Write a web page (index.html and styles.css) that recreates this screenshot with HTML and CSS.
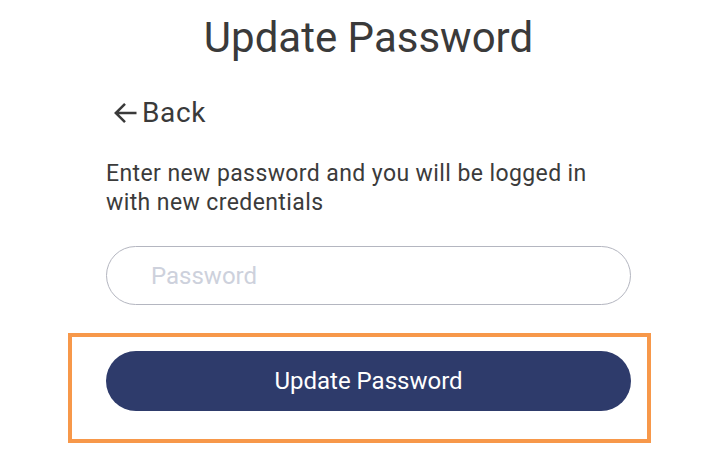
FILE: index.html
```html
<!DOCTYPE html>
<html>
<head>
<meta charset="utf-8">
<link rel="stylesheet" href="styles.css">
</head>
<body>
<main class="page">
  <h1 class="title">Update Password</h1>
  <div class="form">
    <a class="back" href="#">
      <svg class="back-icon" width="24" height="22" viewBox="0 0 24 22" aria-hidden="true">
        <path d="M23.5 11H3M12 1.8L2.8 11l9.2 9.2" fill="none" stroke="#3a3a3a" stroke-width="2.5" stroke-linecap="butt" stroke-linejoin="miter"/>
      </svg>
      <span>Back</span>
    </a>
    <p class="intro">Enter new password and you will be logged in with new credentials</p>
    <input class="field" type="password" placeholder="Password">
  </div>
  <div class="highlight">
    <button class="submit" type="button">Update Password</button>
  </div>
</main>
</body>
</html>
```
FILE: styles.css
```css
* { box-sizing: border-box; }
html, body { margin: 0; padding: 0; background: #fff; }
body { font-family: Roboto, "Noto Sans", sans-serif; color: #3b3b3b; }
.page { width: 704px; padding-top: 14px; }
.title {
  margin: 0;
  font-size: 42px;
  font-weight: 400;
  line-height: 48px;
  text-align: center;
  width: 525px;
  margin-left: 106px;
  color: #3a3a3a;
}
.form { margin-left: 106px; width: 525px; display: flex; flex-direction: column; align-items: flex-start; }
.back {
  display: flex;
  align-items: center;
  gap: 5px;
  margin-top: 36px;
  margin-left: 7px;
  font-size: 28px;
  line-height: 30px;
  letter-spacing: 0.6px;
  color: #3a3a3a;
  text-decoration: none;
}
.intro {
  margin: 31px 0 0;
  font-size: 23px;
  line-height: 29px;
  letter-spacing: 0.4px;
  color: #3b3b3b;
  width: 510px;
}
.field {
  margin-top: 29px;
  width: 525px;
  height: 59px;
  border: 1.5px solid #b4b6c0;
  border-radius: 30px;
  padding: 0 0 0 44px;
  font-family: inherit;
  font-size: 24px;
  outline: none;
}
.field::placeholder { color: #cdd1dc; }
.highlight {
  margin-top: 28px;
  margin-left: 68px;
  width: 583px;
  border: 4px solid #f7984a;
  padding: 14px 16px 28px 34px;
}
.submit {
  display: block;
  width: 525px;
  height: 60px;
  border: 0;
  border-radius: 30px;
  background: #2e3b6b;
  color: #fff;
  font-family: inherit;
  font-size: 24px;
}
```
